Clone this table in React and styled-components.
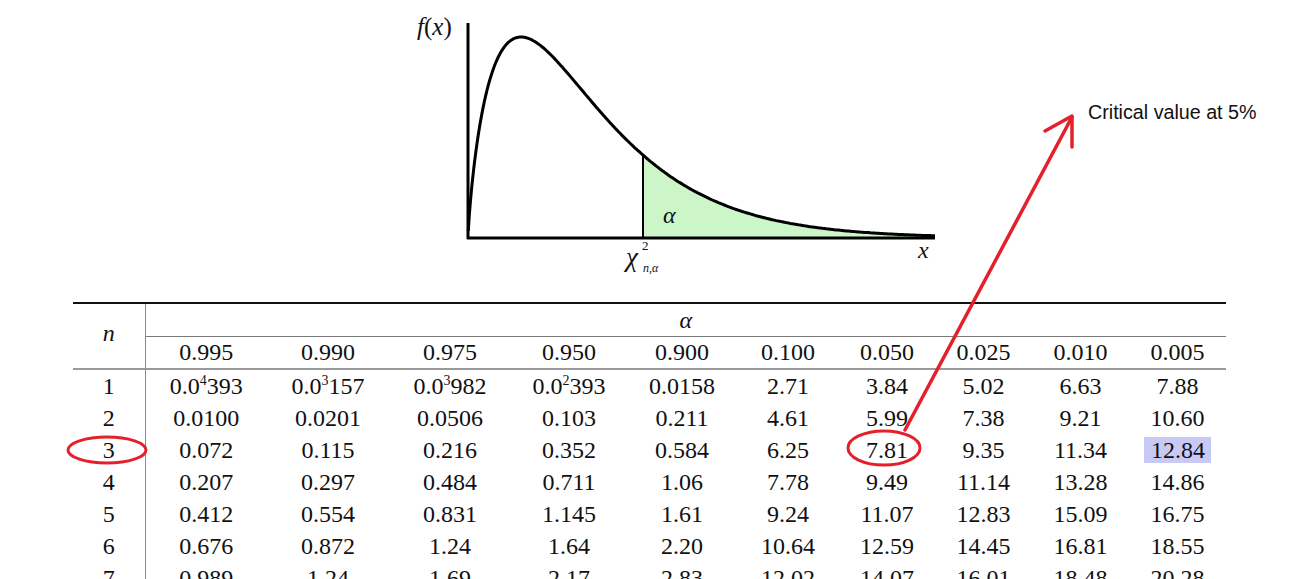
import React from 'react'
import styled, { createGlobalStyle } from 'styled-components'

const GlobalStyle = createGlobalStyle`
  html, body {
    margin: 0;
    padding: 0;
    background: #ffffff;
  }
  body {
    font-family: "Liberation Serif", "Times New Roman", serif;
    color: #111111;
  }
`

const Page = styled.div`
  position: relative;
  width: 1306px;
  height: 579px;
  overflow: hidden;
  background: #ffffff;
`

const ChartArea = styled.div`
  height: 302px;
  padding-left: 400px;
  box-sizing: border-box;
`

const Label = styled.text`
  font-family: "Liberation Serif", "Times New Roman", serif;
  font-style: ${(p) => (p.$upright ? 'normal' : 'italic')};
  font-size: ${(p) => p.$size || 24}px;
  fill: #111111;
`

const TableWrap = styled.div`
  padding-left: 73px;
`

const Table = styled.table`
  border-collapse: collapse;
  table-layout: fixed;
  width: 1153px;
  font-family: "Liberation Serif", "Times New Roman", serif;
  font-size: 24px;
  color: #111111;
`

const NHead = styled.th`
  font-weight: normal;
  font-style: italic;
  border-top: 2px solid #111111;
  border-bottom: 2px solid #9a9a9a;
  border-right: 1px solid #8a8a8a;
  padding: 0 0 6px;
  vertical-align: middle;
`

const AlphaHead = styled.th`
  font-weight: normal;
  font-style: italic;
  height: 32px;
  padding: 0;
  border-top: 2px solid #111111;
  border-bottom: 1px solid #7a7a7a;
  line-height: 32px;
`

const ColHead = styled.th`
  font-weight: normal;
  height: 31px;
  padding: 0;
  line-height: 31px;
  border-bottom: 2px solid #9a9a9a;
`

const Cell = styled.td`
  height: 32px;
  padding: 0;
  line-height: 32px;
  text-align: center;
  white-space: nowrap;
  border-right: ${(p) => (p.$first ? '1px solid #8a8a8a' : 'none')};
`

const Exp = styled.sup`
  font-size: 14px;
  vertical-align: baseline;
  position: relative;
  top: -9px;
  line-height: 0;
`

const Mark = styled.span`
  display: inline-block;
  background: #c9c9f6;
  padding: 0 6px 0 7px;
  line-height: 26px;
  margin-top: -2px;
`

const Overlay = styled.svg`
  position: absolute;
  left: 0;
  top: 0;
  pointer-events: none;
`

const Note = styled.div`
  position: absolute;
  left: 1088px;
  top: 101px;
  font-family: "Liberation Sans", Arial, sans-serif;
  font-size: 19.7px;
  color: #111111;
  white-space: nowrap;
`

const widths = [72, 122, 122, 122, 116, 110, 102, 96, 97, 97, 97]
const alphas = ['0.995', '0.990', '0.975', '0.950', '0.900', '0.100', '0.050', '0.025', '0.010', '0.005']

const rows = [
  ['1', ['0.0', '4', '393'], ['0.0', '3', '157'], ['0.0', '3', '982'], ['0.0', '2', '393'], '0.0158', '2.71', '3.84', '5.02', '6.63', '7.88'],
  ['2', '0.0100', '0.0201', '0.0506', '0.103', '0.211', '4.61', '5.99', '7.38', '9.21', '10.60'],
  ['3', '0.072', '0.115', '0.216', '0.352', '0.584', '6.25', '7.81', '9.35', '11.34', '12.84'],
  ['4', '0.207', '0.297', '0.484', '0.711', '1.06', '7.78', '9.49', '11.14', '13.28', '14.86'],
  ['5', '0.412', '0.554', '0.831', '1.145', '1.61', '9.24', '11.07', '12.83', '15.09', '16.75'],
  ['6', '0.676', '0.872', '1.24', '1.64', '2.20', '10.64', '12.59', '14.45', '16.81', '18.55'],
  ['7', '0.989', '1.24', '1.69', '2.17', '2.83', '12.02', '14.07', '16.01', '18.48', '20.28'],
]

// gamma-shaped density, fitted to the drawing: axis at x=68, baseline y=238
const X0 = 68
const BASE = 238
const PEAK_U = 53
const SHAPE = 0.8
const SCALE = PEAK_U / SHAPE
const HEIGHT = 201

const h = (u) => HEIGHT * Math.pow(u / PEAK_U, SHAPE) * Math.exp(-(u - PEAK_U) / SCALE)
const point = (u) => `${(X0 + u).toFixed(1)},${(BASE - h(u)).toFixed(1)}`

function curvePoints(from, to) {
  const out = []
  let u = from
  while (u < to) {
    out.push(point(u))
    u += u < 20 ? 0.5 : 2
  }
  out.push(point(to))
  return out
}

const CUT = 175
const END = 467
const curveD = `M${curvePoints(0.3, END).join(' L')}`
const fillD = `M${X0 + CUT},${BASE} L${curvePoints(CUT, END).join(' L')} L${X0 + END},${BASE} Z`

function Chart() {
  return (
    <svg width="560" height="300" viewBox="0 0 560 300">
      <path d={fillD} fill="#cdf6c8" />
      <line x1="68" y1="23" x2="68" y2="239" stroke="#000" strokeWidth="3" />
      <line x1="67" y1="238" x2="535" y2="238" stroke="#000" strokeWidth="3" />
      <line x1={X0 + CUT} y1={BASE - h(CUT)} x2={X0 + CUT} y2="238" stroke="#000" strokeWidth="2" />
      <path d={curveD} fill="none" stroke="#000" strokeWidth="3" strokeLinejoin="round" />
      <Label x="17" y="35" $size={25} $upright>
        <tspan fontStyle="italic">f</tspan>(<tspan fontStyle="italic">x</tspan>)
      </Label>
      <Label x="263" y="223">α</Label>
      <Label x="226" y="266" $size={27}>χ</Label>
      <Label x="242" y="250" $size={13} $upright>2</Label>
      <Label x="243" y="272" $size={12}>n,α</Label>
      <Label x="518" y="258">x</Label>
    </svg>
  )
}

function Value({ v }) {
  if (Array.isArray(v)) {
    return (
      <>
        {v[0]}
        <Exp>{v[1]}</Exp>
        {v[2]}
      </>
    )
  }
  if (v === '12.84') return <Mark>{v}</Mark>
  return v
}

export default function App() {
  return (
    <Page>
      <GlobalStyle />
      <ChartArea>
        <Chart />
      </ChartArea>
      <TableWrap>
        <Table>
          <colgroup>
            {widths.map((w, i) => (
              <col key={i} style={{ width: w }} />
            ))}
          </colgroup>
          <thead>
            <tr>
              <NHead rowSpan={2}>n</NHead>
              <AlphaHead colSpan={10}>α</AlphaHead>
            </tr>
            <tr>
              {alphas.map((a) => (
                <ColHead key={a}>{a}</ColHead>
              ))}
            </tr>
          </thead>
          <tbody>
            {rows.map((r) => (
              <tr key={r[0]}>
                {r.map((v, i) => (
                  <Cell key={i} $first={i === 0}>
                    <Value v={v} />
                  </Cell>
                ))}
              </tr>
            ))}
          </tbody>
        </Table>
      </TableWrap>

      <Overlay width="1306" height="579" viewBox="0 0 1306 579">
        <g fill="none" stroke="#e4202b" strokeLinecap="round" strokeLinejoin="round">
          <ellipse cx="107" cy="450" rx="39" ry="13" strokeWidth="3" />
          <ellipse cx="884" cy="448" rx="36" ry="17" strokeWidth="3" />
          <line x1="905" y1="430" x2="1072" y2="117" strokeWidth="3.5" />
          <polyline points="1045,131 1072,116 1072,147" strokeWidth="3.5" />
        </g>
      </Overlay>
      <Note>Critical value at 5%</Note>
    </Page>
  )
}
